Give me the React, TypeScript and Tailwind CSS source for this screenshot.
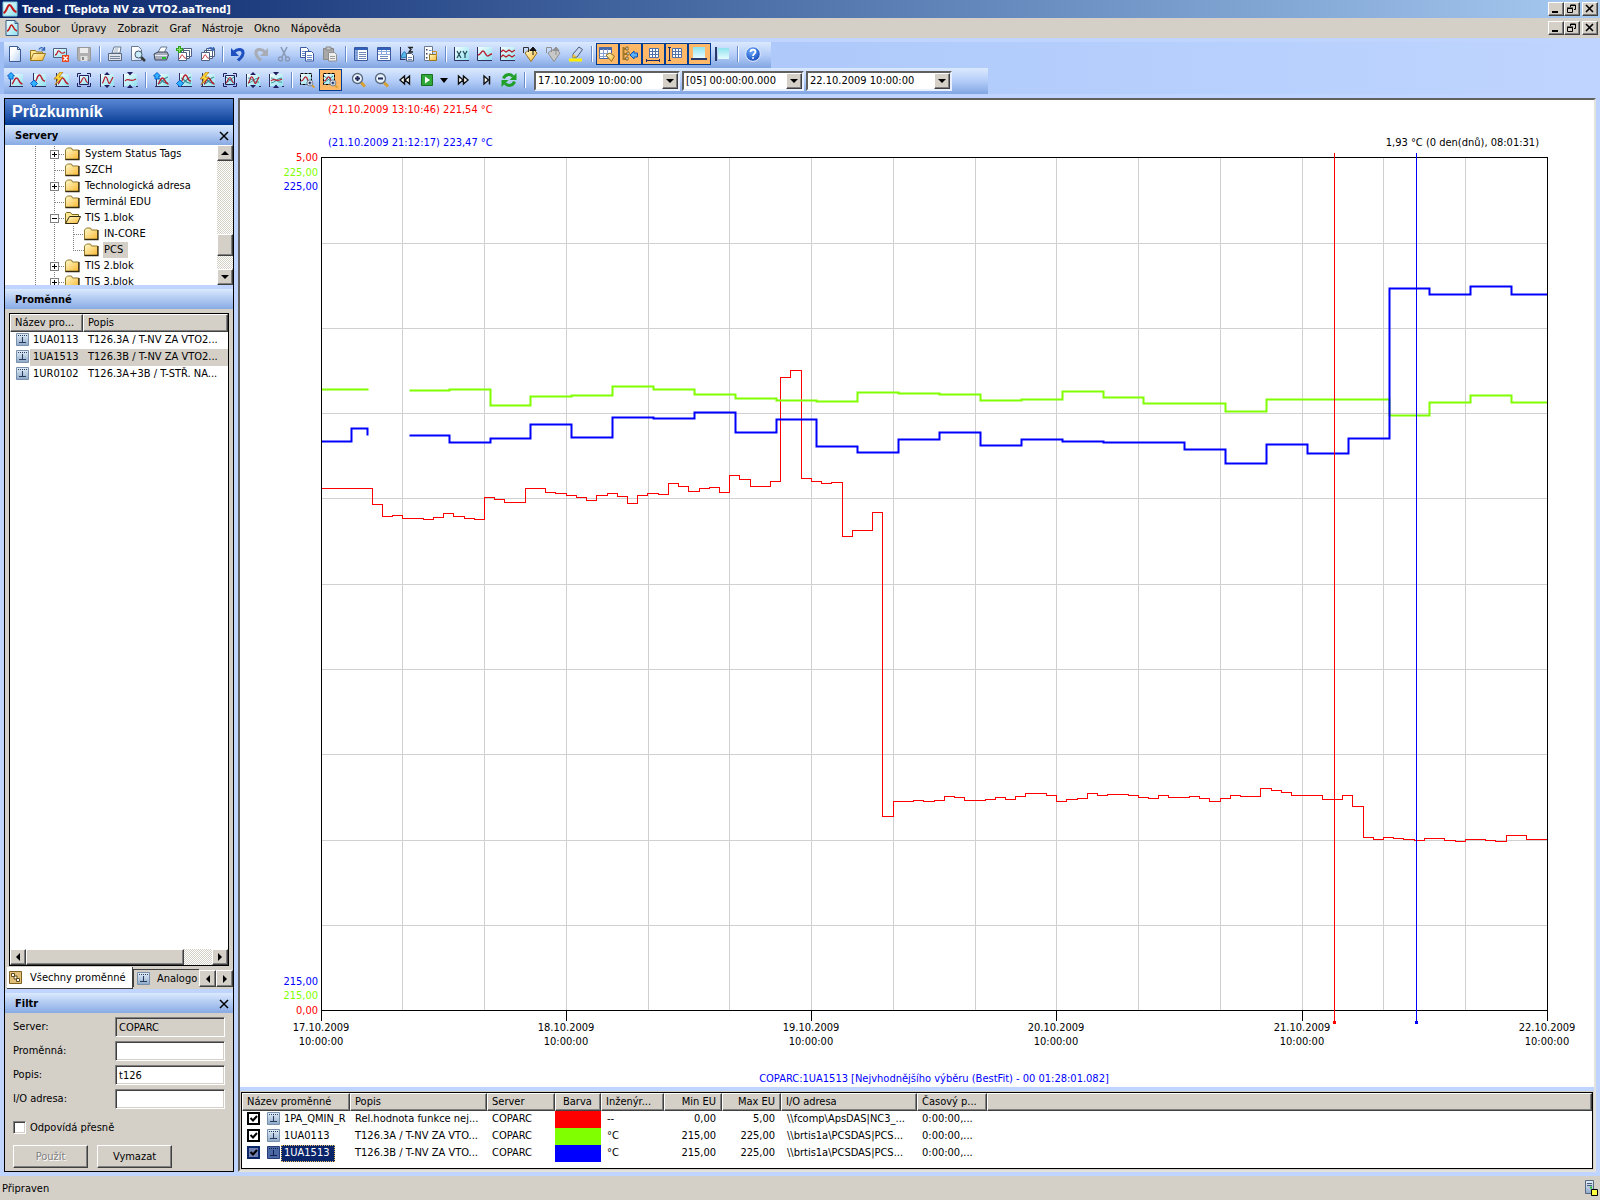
import type { ReactNode } from 'react'
import clsx from 'clsx'

type Point = [x: number, y: number]

const PLOT_W = 1226
const PLOT_H = 853

const GREEN_A: Point[] = [[0, 232], [46, 233]]
const GREEN_B: Point[] = [
  [88, 233], [128, 232], [169, 248], [209, 239], [250, 238], [291, 229], [332, 232], [373, 237],
  [414, 241], [455, 243], [495, 244], [536, 235], [577, 236], [618, 237], [659, 243], [700, 242],
  [741, 234], [782, 240], [822, 246], [904, 254], [945, 242], [1068, 258], [1108, 245], [1149, 238],
  [1190, 245], [PLOT_W, 245],
]

const BLUE_A: Point[] = [[0, 284], [30, 271], [46, 278]]
const BLUE_B: Point[] = [
  [88, 278], [128, 285], [169, 281], [209, 267], [250, 280], [291, 260], [332, 261], [373, 255],
  [414, 275], [455, 262], [495, 289], [536, 295], [577, 282], [618, 275], [659, 288], [700, 282],
  [741, 284], [782, 285], [863, 292], [904, 306], [945, 287], [986, 296], [1027, 281], [1068, 131],
  [1108, 137], [1149, 129], [1190, 137], [PLOT_W, 137],
]

const RED: Point[] = [
  [0, 331], [51, 347], [61, 359], [71, 358], [81, 361], [102, 362], [112, 360], [122, 356],
  [132, 359], [143, 361], [153, 362], [163, 340], [173, 342], [183, 345], [204, 331], [224, 335],
  [234, 336], [245, 338], [255, 340], [265, 343], [275, 338], [286, 336], [296, 339], [306, 346],
  [316, 338], [326, 336], [337, 337], [347, 326], [357, 329], [367, 334], [378, 331], [388, 330],
  [398, 335], [408, 318], [418, 322], [429, 329], [449, 324], [459, 220], [469, 213], [480, 321],
  [490, 324], [500, 326], [510, 325], [521, 379], [531, 373], [551, 355], [561, 659], [572, 644],
  [592, 643], [602, 644], [613, 643], [623, 639], [633, 640], [643, 643], [664, 642], [674, 640],
  [684, 642], [694, 639], [704, 636], [725, 638], [735, 644], [745, 642], [756, 641], [766, 636],
  [776, 638], [786, 637], [807, 638], [817, 640], [827, 641], [837, 638], [847, 640], [868, 639],
  [878, 641], [888, 644], [899, 641], [909, 638], [919, 639], [939, 631], [950, 633], [960, 635],
  [970, 638], [1001, 642], [1021, 638], [1031, 649], [1042, 680], [1052, 682], [1062, 680],
  [1072, 681], [1082, 682], [1093, 683], [1103, 681], [1123, 683], [1134, 684], [1144, 682],
  [1164, 683], [1174, 684], [1185, 678], [1205, 682], [PLOT_W, 682],
]

const DAYS = ['17.10.2009', '18.10.2009', '19.10.2009', '20.10.2009', '21.10.2009', '22.10.2009']

// Each value is held until the next sample
function stepPath(points: Point[]) {
  return points.map(([x, y], i) => (i === 0 ? `M${x} ${y}` : `H${x}V${y}`)).join('')
}

const gridX = (i: number) => Math.floor((i * PLOT_W) / 15 + 0.25)
const gridY = (i: number) => Math.floor((i * PLOT_H) / 10 + 0.7)

const RAISED = 'border border-t-white border-l-white border-r-[#404040] border-b-[#404040] bg-[#d4d0c8] shadow-[inset_-1px_-1px_0_#808080]'
const SUNKEN = 'border border-t-[#808080] border-l-[#808080] border-r-white border-b-white shadow-[inset_1px_1px_0_#404040,inset_-1px_-1px_0_#d4d0c8]'
const DITHER = 'bg-[repeating-conic-gradient(#ffffff_0_25%,#d4d0c8_0_50%)] bg-[length:2px_2px]'

/* ---------- icons ---------- */

function Ico({ children }: { children: ReactNode }) {
  return (
    <svg viewBox="0 0 16 16" className="block h-4 w-4 shrink-0" fill="none" aria-hidden="true">
      {children}
    </svg>
  )
}

function Defs() {
  return (
    <svg className="absolute h-0 w-0" aria-hidden="true">
      <defs>
        <linearGradient id="tile" x1="0" y1="0" x2="1" y2="1">
          <stop offset="0" stopColor="#f4ffff" />
          <stop offset="1" stopColor="#8fe0ee" />
        </linearGradient>
        <linearGradient id="cyan" x1="0" y1="0" x2="0" y2="1">
          <stop offset="0" stopColor="#8fe3ee" />
          <stop offset="1" stopColor="#e6fcff" />
        </linearGradient>
        <linearGradient id="folder" x1="0" y1="0" x2="1" y2="1">
          <stop offset="0" stopColor="#fffbd0" />
          <stop offset="1" stopColor="#f8b830" />
        </linearGradient>
        <linearGradient id="page" x1="0" y1="0" x2="1" y2="1">
          <stop offset="0.3" stopColor="#ffffff" />
          <stop offset="1" stopColor="#b8d0f4" />
        </linearGradient>
        <linearGradient id="steel" x1="0" y1="0" x2="0" y2="1">
          <stop offset="0" stopColor="#e4f0fa" />
          <stop offset="1" stopColor="#8ea8c8" />
        </linearGradient>
        <radialGradient id="help" cx="0.4" cy="0.3" r="0.8">
          <stop offset="0" stopColor="#6fb0ff" />
          <stop offset="1" stopColor="#0a3cb4" />
        </radialGradient>
      </defs>
    </svg>
  )
}

function AppIcon() {
  return (
    <Ico>
      <path d="M1 1h14v14H1z" fill="url(#tile)" stroke="#7cc8dc" />
      <path d="M1.500 12C5 11 5 4 7.500 4S10 10 14.500 11" stroke="#c01818" strokeWidth="2" />
    </Ico>
  )
}

function DocIcon() {
  return (
    <Ico>
      <path d="M2 .5h9l3 3v12H2z" fill="url(#tile)" stroke="#3a5a8a" />
      <path d="M11 .5v3h3" stroke="#3a5a8a" />
      <path d="M3 11C6 11 5.500 5 7.500 5S9 10 13 11" stroke="#c01818" strokeWidth="1.500" />
    </Ico>
  )
}

function Tile({ multi, low, children }: { multi?: boolean; low?: boolean; children?: ReactNode }) {
  return (
    <Ico>
      <path d="M3 2h13v12H3z" fill="url(#tile)" />
      <path d="M3.500 1v14M2 14.500h14" stroke="#303060" />
      {multi && <path d="M5 6C8 6 9 12 15 11M5 12C9 12 10 6 15 5" stroke="#3a9098" strokeWidth="1.200" />}
      <path d={low ? 'M5 10C7 9 7 3 9.500 3S11 9 15 9' : 'M5 12C7 11 7 6 9.500 6S12 12 15.500 12'} stroke="#b81c2c" strokeWidth="1.400" />
      {children}
    </Ico>
  )
}

const Diamond = ({ low }: { low?: boolean }) => (
  <path d={low ? 'M4 8l3.500 3.500L4 15L.5 11.500z' : 'M4 .5L7.500 4H6v3H2V4H.5z'} fill="#30b0ff" stroke="#0860c8" />
)
const Bolt = () => <path d="M7 0L1 7H5L2 13L10 5H6L10 0z" fill="#ffd838" stroke="#a86810" strokeWidth="0.700" />

function Brackets({ multi }: { multi?: boolean }) {
  return (
    <Ico>
      <path d="M3.500 3.500h9v9h-9z" fill="url(#tile)" stroke="#202060" />
      <path d="M1.500 5V1.500H5M11 1.500h3.500V5M14.500 11v3.500H11M5 14.500H1.500V11" stroke="#202060" />
      {multi && <path d="M4 5L12 11M4 11L12 5" stroke="#3a9098" />}
      <path d="M4 11C6 10 6 5.500 8 5.500S9 10 12 11" stroke="#b81c2c" strokeWidth="1.200" />
    </Ico>
  )
}

function Stretch({ multi, shrink }: { multi?: boolean; shrink?: boolean }) {
  return (
    <Ico>
      <path d="M2 2h13v12H2z" fill="url(#tile)" />
      <path d="M1.500 2v13M14 14.500h2" stroke="#303060" />
      {multi && <path d="M3 6C7 6 9 11 14 10M3 11C7 11 9 6 14 6" stroke="#3a9098" />}
      <path d={shrink ? 'M3 9C6 5 8 11 14 7' : 'M3 11C5 11 5 4 7 5S9 13 11 11L14 5'} stroke="#b81c2c" strokeWidth="1.200" />
      <path d={shrink ? 'M5 0h6L8 3.500zM8 12.500l3 3.500H5z' : 'M8 0l3 3H5zM5 13h6l-3 3z'} fill="#202060" />
    </Ico>
  )
}

function Lens({ x = 0, y = 0, small, sign }: { x?: number; y?: number; small?: boolean; sign: '+' | '-' }) {
  return (
    <g transform={`translate(${x} ${y}) scale(${small ? 0.6 : 1})`}>
      <path d="M9.500 10L14 14.500" stroke="#d8a030" strokeWidth="3" />
      <circle cx="6.500" cy="6.500" r="5" fill="#e8f2fc" stroke="#58687c" strokeWidth="1.300" />
      <path d={sign === '+' ? 'M4 6.500h5M6.500 4v5' : 'M4 6.500h5'} stroke="#202858" strokeWidth="2" />
    </g>
  )
}

function ZoomArea({ multi }: { multi?: boolean }) {
  return (
    <Ico>
      <path d="M2 2h10v10H2z" fill="url(#tile)" />
      {multi && <path d="M2 4L11 11M2 11L11 4" stroke="#3a9098" />}
      <path d="M2 9C5 9 5 4 7 5S8 9 10 10" stroke="#b81c2c" strokeWidth="1.200" />
      <path d="M1.500 1.500h11v11h-11z" stroke="#000" strokeDasharray="3 1" />
      <Lens x={7} y={7} small sign="+" />
    </Ico>
  )
}

function Stack({ children }: { children: ReactNode }) {
  return (
    <Ico>
      <path d="M7.500 2.500h8v8h-8zM5.500 4.500h8v8h-8z" stroke="#506080" fill="#fff" />
      <path d="M2.500 6.500h8v8h-8z" fill="#fff" stroke="#506080" />
      <path d="M3 13C5 12 5 8 6.500 9S8 13 10 12" stroke="#c01828" />
      {children}
    </Ico>
  )
}

const BlueArrow = () => <path d="M9 3.500C10 1 12.500 1 14 3M14.500 1v3h-3" stroke="#3868b8" strokeWidth="1.300" />

function Tag({ gray }: { gray?: boolean }) {
  return (
    <Ico>
      <path d="M3 7l4-3h5l3 3-6 8.500z" fill={gray ? '#c8c8c8' : 'url(#folder)'} stroke={gray ? '#909090' : '#987020'} />
      <path d="M1.500 7V1.500h5V6" stroke={gray ? '#909090' : '#303030'} />
      <path d="M11 9V4M8 4.500L11 1l3 3.500z" stroke={gray ? '#909090' : '#101010'} fill={gray ? '#909090' : '#101010'} />
    </Ico>
  )
}

function GridAxis({ side }: { side?: boolean }) {
  return (
    <Ico>
      <path d="M4.500 2.500h9v9h-9zM7.500 2.500v9M10.500 2.500v9M4.500 5.500h9M4.500 8.500h9" fill="#fff" stroke="#5070a8" />
      <path d={side ? 'M1.500 1v14M0 1.500h3M0 14.500h3' : 'M1 14.500h14M1.500 13v3M14.500 13v3'} stroke="#182868" />
    </Ico>
  )
}

const row1: (ReactNode | '|')[] = [
  <Ico><path d="M2.500 .5h8l3 3v12h-11z" fill="url(#page)" stroke="#3c5a94" /><path d="M10.500 .5v3h3" stroke="#3c5a94" /></Ico>,
  <Ico><path d="M.5 14.500v-10h5l1 1.500h6v2" fill="#ffe890" stroke="#9a7820" /><path d="M.5 14.500l3-7h12l-3 7z" fill="url(#folder)" stroke="#9a7820" /><BlueArrow /></Ico>,
  <Ico><path d="M.5 2.500h13v9H.5z" fill="url(#tile)" stroke="#506080" /><path d="M2 9C5 9 4 4 6 5S8 9 12 6" stroke="#c01828" strokeWidth="1.300" /><path d="M9 9h7v7H9z" fill="#e84820" /><path d="M10.500 10.500l4 4M14.500 10.500l-4 4" stroke="#fff" strokeWidth="1.300" /></Ico>,
  <Ico><path d="M1.500 1.500h13v13h-12l-1-1z" fill="#b0b0b0" stroke="#989898" /><path d="M4 2h8v5H4z" fill="#ececec" /><path d="M4.500 10h7v5h-7z" fill="#e0e0e0" /><path d="M6 11h2v3H6z" fill="#888" /></Ico>,
  '|',
  <Ico><path d="M5 7l2-6h7l-1 6z" fill="#fff" stroke="#687890" /><path d="M7.500 3h4M7 5h4" stroke="#98a8c0" /><path d="M1.500 7.500h13v7h-13z" fill="#e0e4ea" stroke="#586880" /><path d="M3 10.500h10M3 12.500h10" stroke="#78889c" /></Ico>,
  <Ico><path d="M1.500 .5h7l3 3v11h-10z" fill="url(#page)" stroke="#687890" /><path d="M11 11l4 4" stroke="#383838" strokeWidth="2.500" /><circle cx="8.500" cy="8.500" r="3.500" fill="#c8ecfa" stroke="#485868" /></Ico>,
  <Ico><path d="M5 6l3-5h6l-3 6z" fill="#fff" stroke="#687890" /><path d="M1 8l4-2h9l1.500 3-2 5H2z" fill="#a8acbc" stroke="#404858" /><path d="M2 9.500h12" stroke="#e8ecf4" /><path d="M9 11h4v2H9z" fill="#20c030" /></Ico>,
  <Stack><path d="M3.500 0v7M0 3.500h7" stroke="#30a020" strokeWidth="3" /><path d="M3.500 1v5M1 3.500h5" stroke="#90e070" /></Stack>,
  <Stack><BlueArrow /></Stack>,
  '|',
  <Ico><path d="M4 6C8 2 13.500 3 13 7.500S10 12 8 14.500" stroke="#2050c0" strokeWidth="3" /><path d="M1 2v8h8z" fill="#2050c0" /></Ico>,
  <Ico><path d="M12 6C8 2 2.500 3 3 7.500S6 12 8 14.500" stroke="#a8acb4" strokeWidth="3" /><path d="M15 2v8H7z" fill="#a8acb4" /></Ico>,
  <Ico><path d="M5 1l5 10M11 1L6 11" stroke="#8898b4" strokeWidth="1.500" /><circle cx="4.500" cy="13" r="2" stroke="#8898b4" strokeWidth="1.300" /><circle cx="11.500" cy="13" r="2" stroke="#8898b4" strokeWidth="1.300" /></Ico>,
  <Ico><path d="M1.500 1.500h6l2 2v8h-8z" fill="#fff" stroke="#3858a0" /><path d="M3 5.500h4M3 7.500h4M3 9.500h3" stroke="#6888c8" /><path d="M6.500 5.500h6l2 2v7.500h-8z" fill="#fff" stroke="#3858a0" /><path d="M8 9.500h5M8 11.500h5M8 13.500h5" stroke="#6888c8" /></Ico>,
  <Ico><path d="M1.500 2.500h10v11h-10z" fill="#a8a8a8" stroke="#888" /><path d="M4 1h5v3H4z" fill="#c8c8c8" stroke="#888" /><path d="M6.500 6.500h6l2 2v6.500h-8z" fill="#eee" stroke="#909090" /><path d="M8 10.500h5M8 12.500h5" stroke="#a0a0a0" /></Ico>,
  '|',
  <Ico><path d="M1.500 1.500h13v13h-13z" fill="#fff" stroke="#3858a0" /><path d="M2 2h3v12H2z" fill="#88a8e0" /><path d="M2 3h12" stroke="#3060b8" strokeWidth="2" /><path d="M6 6.500h7M6 8.500h7M6 10.500h7M6 12.500h7M3 6.500h1M3 9.500h1M3 12.500h1" stroke="#7088b8" /></Ico>,
  <Ico><path d="M1.500 1.500h13v13h-13z" fill="#fff" stroke="#3858a0" /><path d="M2 3h12" stroke="#3060b8" strokeWidth="2" /><path d="M2 5.500h12M5.500 4v4M10.500 4v4M2 8.500h12" stroke="#88a8e0" /><path d="M4 10.500h8M4 12.500h8" stroke="#7088b8" /></Ico>,
  <Ico><path d="M1.500 1v13M1.500 13.500h5" stroke="#303060" /><path d="M2 12c2-8 5-8 6-1z" fill="#58b8e8" stroke="#2878b8" /><path d="M14 1.500h-4l2 2-2 2.500h4" stroke="#202020" strokeWidth="1.300" /><path d="M7.500 7.500h5l2 2v5.500h-7z" fill="#fff" stroke="#485878" /><path d="M9 11.500h4M9 13.500h4" stroke="#7088b8" /></Ico>,
  <Ico><path d="M2.500 .5h8v14h-8z" fill="#fff" stroke="#687890" /><path d="M4 3h1.500v1.500H4zM4 7h1.500v1.500H4zM4 11h1.500v1.500H4z" fill="#404858" /><path d="M7 4.500h2.500M7 8h2" stroke="#7088b8" /><path d="M7.500 8.500h7v6h-7z" fill="url(#folder)" stroke="#9a7820" /><path d="M10 5.500h4.500v5" stroke="#c89020" /></Ico>,
  '|',
  <Ico><path d="M2 1h14v13H2z" fill="url(#tile)" /><path d="M1.500 1v13.500H16M1 4h1M1 8h1" stroke="#303060" /><path d="M4 5l4 7M8 5l-4 7M10 5l2 3.500V12M14 5l-2 3.500" stroke="#204858" strokeWidth="1.200" /></Ico>,
  <Ico><path d="M2 1h14v13H2z" fill="url(#tile)" /><path d="M1.500 1v13.500H16" stroke="#303060" /><path d="M2 9C5 9 5 5 7 5S10 11 12 10 14 8 16 8" stroke="#b81c2c" strokeWidth="1.300" /></Ico>,
  <Ico><path d="M2 1h14v13H2z" fill="url(#tile)" /><path d="M1.500 1v13.500H16" stroke="#303060" /><path d="M2 6l2-2 3 2 3-2 3 2 3-2M2 11l2-2 3 2 3-2 3 2 3-2" stroke="#b81c2c" strokeWidth="1.300" /></Ico>,
  <Tag />,
  <Tag gray />,
  <Ico><path d="M5 8l6-7 3.500 2.500L9 11l-4 1z" fill="#c8d8f0" stroke="#485878" /><path d="M5 8l4 3-4.500 1z" fill="#e8c030" /><path d="M1 14h13" stroke="#fff000" strokeWidth="3" /></Ico>,
  '|',
]

const viewToggles = [
  { label: 'Tabulka značek', icon: <Ico><path d="M.5 1.500h12v11H.5z" fill="#fff" stroke="#4868a8" /><path d="M.5 2.500h12" stroke="#4868a8" strokeWidth="3" /><path d="M.5 7.500h12M.5 10.500h12M4.500 3v9M8.500 3v9" stroke="#88a0d0" /><path d="M7 9l4-2 4.500 3-3 5.500z" fill="url(#folder)" stroke="#987020" /></Ico> },
  { label: 'Seznam', icon: <Ico><path d="M1.500 1v13M1 3h4M1 8h4M1 13h4" stroke="#a07828" strokeWidth="2" /><path d="M4 1h2v3H4zM5 6h2v3H5zM4 11h2v3H4z" fill="#fff" stroke="#806020" /><path d="M8 9l4-4v2h3.500v4H12v2z" fill="#58b0f8" stroke="#1050b0" /></Ico> },
  { label: 'Osa X', icon: <GridAxis /> },
  { label: 'Osa Y', icon: <GridAxis side /> },
  { label: 'Spodní panel', icon: <Ico><path d="M2 1h12v11H2z" fill="url(#cyan)" /><path d="M0 13h16" stroke="#283868" strokeWidth="2" /></Ico> },
]

const row2: (ReactNode | '|')[] = [
  <Tile><Diamond /></Tile>,
  <Tile low><Diamond low /></Tile>,
  <Tile><Bolt /></Tile>,
  <Brackets />,
  <Stretch />,
  <Stretch shrink />,
  '|',
  <Tile multi><Diamond /></Tile>,
  <Tile multi low><Diamond low /></Tile>,
  <Tile multi><Bolt /></Tile>,
  <Brackets multi />,
  <Stretch multi />,
  <Stretch multi shrink />,
  '|',
  <ZoomArea />,
]

const navIcons: ReactNode[] = [
  <Ico><Lens sign="+" /></Ico>,
  <Ico><Lens sign="-" /></Ico>,
  <Ico><path d="M7.500 4v8L3 8zM12.500 4v8L8 8z" fill="#fff" stroke="#101010" strokeWidth="1.400" /></Ico>,
]

function Separator() {
  return (
    <span className="flex h-[22px] w-2 shrink-0 items-center justify-center">
      <span className="h-4 w-[2px] border-r border-white bg-[#6a8ccb]" />
    </span>
  )
}

function ToolButton({ label, pressed, children }: { label: string; pressed?: boolean; children: ReactNode }) {
  return (
    <button
      type="button"
      aria-label={label}
      aria-pressed={pressed}
      className={clsx('flex h-[22px] w-[23px] shrink-0 items-center', pressed ? 'border border-[#003c94] bg-[#ffb868] pl-[2px]' : 'pl-[3px]')}
    >
      {children}
    </button>
  )
}

function ToolItems({ items, name }: { items: (ReactNode | '|')[]; name: string }) {
  return (
    <>
      {items.map((item, i) =>
        item === '|' ? <Separator key={i} /> : <ToolButton key={i} label={`${name} ${i + 1}`}>{item}</ToolButton>
      )}
    </>
  )
}

function Combo({ label, value, className }: { label: string; value: string; className: string }) {
  return (
    <div className={clsx('flex h-5 shrink-0 items-stretch border-2 border-t-[#606060] border-l-[#606060] border-r-[#e8f0ff] border-b-[#e8f0ff] bg-white', className)}>
      <select aria-label={label} className="h-4 min-w-0 flex-1 appearance-none bg-white pl-[2px] leading-4 outline-none">
        <option>{value}</option>
      </select>
      <span className={clsx('flex w-4 shrink-0 items-center justify-center', RAISED)}>
        <Triangle dir="down" />
      </span>
    </div>
  )
}

function Triangle({ dir }: { dir: 'up' | 'down' | 'left' | 'right' }) {
  const d = { up: 'M0 6h8L4 2z', down: 'M0 2h8L4 6z', left: 'M6 0v8L2 4z', right: 'M2 0v8l4-4z' }[dir]
  return (
    <svg viewBox="0 0 8 8" className="h-2 w-2" aria-hidden="true">
      <path d={d} fill="#000" />
    </svg>
  )
}

function ScrollButton({ dir, label, className }: { dir: 'up' | 'down' | 'left' | 'right'; label: string; className: string }) {
  return (
    <button type="button" aria-label={label} className={clsx('flex shrink-0 items-center justify-center', RAISED, className)}>
      <Triangle dir={dir} />
    </button>
  )
}

/* ---------- title and menu ---------- */

function WindowButtons() {
  const btn = clsx('flex h-[14px] w-4 items-center justify-center', RAISED)
  return (
    <div className="ml-auto flex pr-[2px]">
      <button type="button" aria-label="Minimalizovat" className={btn}>
        <svg viewBox="0 0 12 10" className="h-[10px] w-3"><path d="M2 8h6" stroke="#000" strokeWidth="2" /></svg>
      </button>
      <button type="button" aria-label="Obnovit" className={btn}>
        <svg viewBox="0 0 12 10" className="h-[10px] w-3" fill="none"><path d="M4.500 3V1h5v4.500H8M4 1.500h6M1.500 4.500h5v4h-5zM1 4h6" stroke="#000" /></svg>
      </button>
      <button type="button" aria-label="Zavřít" className={clsx(btn, 'ml-[2px]')}>
        <svg viewBox="0 0 12 10" className="h-[10px] w-3"><path d="M2 1l7 7M9 1L2 8" stroke="#000" strokeWidth="1.600" /></svg>
      </button>
    </div>
  )
}

function Toolbars() {
  const bar = 'flex h-[26px] items-start pt-px bg-linear-to-b from-[#dbe9fd] via-[#b4cdf8] to-[#82a6e2]'
  return (
    <div className="my-1 bg-linear-to-r from-[#9ebef5] to-[#bfd5ff] pl-1">
      <div className={clsx(bar, 'w-fit pr-[6px]')}>
        <ToolItems items={row1} name="Nástroj" />
        {viewToggles.map((t) => (
          <ToolButton key={t.label} label={t.label} pressed>{t.icon}</ToolButton>
        ))}
        <ToolButton label="Boční panel">
          <Ico><path d="M4 2h11v11H4z" fill="url(#cyan)" /><path d="M2 1v14" stroke="#283868" strokeWidth="2" /></Ico>
        </ToolButton>
        <Separator />
        <ToolButton label="Nápověda">
          <Ico>
            <circle cx="8" cy="8" r="7.300" fill="url(#help)" stroke="#e8f0ff" />
            <path d="M5.500 6C5.500 3 10.500 3 10.500 6C10.500 7.500 8 7.800 8 10M8 11.200v1.600" stroke="#fff" strokeWidth="1.800" />
          </Ico>
        </ToolButton>
      </div>
      <div className={clsx(bar, 'w-fit pr-9')}>
        <ToolItems items={row2} name="Měřítko" />
        <ToolButton label="Přiblížit všechny" pressed><ZoomArea multi /></ToolButton>
        <div className="flex pl-[6px]">
          <ToolItems items={navIcons} name="Posun" />
        </div>
        <button type="button" aria-label="Přehrát" className="flex h-[22px] w-[19px] items-center justify-center">
          <Ico><path d="M2.500 2.500h11v11h-11z" fill="#30a838" stroke="#187020" /><path d="M6 4.500l5 3.500-5 3.500z" fill="#fff" /></Ico>
        </button>
        <button type="button" aria-label="Rychlost" className="flex h-[22px] w-4 items-center justify-center">
          <svg viewBox="0 0 8 5" className="h-[5px] w-2"><path d="M0 0h8L4 5z" fill="#000" /></svg>
        </button>
        <ToolButton label="Vpřed"><Ico><path d="M3.500 4v8L8 8zM8.500 4v8L13 8z" fill="#fff" stroke="#101010" strokeWidth="1.400" /></Ico></ToolButton>
        <ToolButton label="Na konec"><Ico><path d="M6 4v8l4.500-4z" fill="#fff" stroke="#101010" strokeWidth="1.400" /><path d="M11.500 4v8.500" stroke="#101010" strokeWidth="1.500" /></Ico></ToolButton>
        <ToolButton label="Obnovit data">
          <Ico>
            <path d="M2.500 6.500C4 2 9 1.500 12 4.500M13.500 9.500C12 14 7 14.500 4 11.500" stroke="#20a028" strokeWidth="3" />
            <path d="M15.500 1v7H8.500zM.5 15V8h7z" fill="#20a028" />
          </Ico>
        </ToolButton>
        <Separator />
        <div className="flex gap-[2px] pt-[2px] pl-[5px]">
          <Combo label="Začátek" value="17.10.2009 10:00:00" className="w-[146px]" />
          <Combo label="Délka" value="[05] 00:00:00.000" className="w-[122px]" />
          <Combo label="Konec" value="22.10.2009 10:00:00" className="w-[146px]" />
        </div>
      </div>
    </div>
  )
}

/* ---------- sidebar ---------- */

function PaneTitle({ children, closable }: { children: ReactNode; closable?: boolean }) {
  return (
    <div className="flex h-5 shrink-0 items-center justify-between bg-linear-to-b from-[#dbe9fd] to-[#88aae4] pt-[2px] pr-1 pl-[10px]">
      <h2 className="font-bold">{children}</h2>
      {closable && (
        <button type="button" aria-label="Zavřít panel">
          <svg viewBox="0 0 10 10" className="h-[10px] w-[10px]"><path d="M1 1l8 8M9 1L1 9" stroke="#000" strokeWidth="1.500" /></svg>
        </button>
      )}
    </div>
  )
}

interface TreeNode {
  label: string
  sign?: '+' | '-'
  child?: 'mid' | 'last'
  selected?: boolean
}

const tree: TreeNode[] = [
  { label: 'System Status Tags', sign: '+' },
  { label: 'SZCH' },
  { label: 'Technologická adresa', sign: '+' },
  { label: 'Terminál EDU' },
  { label: 'TIS 1.blok', sign: '-' },
  { label: 'IN-CORE', child: 'mid' },
  { label: 'PCS', child: 'last', selected: true },
  { label: 'TIS 2.blok', sign: '+' },
  { label: 'TIS 3.blok', sign: '+' },
]

function TreeRow({ node }: { node: TreeNode }) {
  const w = node.child ? 79 : 60
  return (
    <li className="flex h-4 items-center">
      <svg width={w} height="16" className="shrink-0" fill="none" shapeRendering="crispEdges" aria-hidden="true">
        <path d="M30.500 0v16M49.500 0v16" stroke="#808080" strokeDasharray="1 1" />
        {node.child ? (
          <path d={node.child === 'last' ? 'M68.500 0v8.500h11' : 'M68.500 0v16M69 8.500h10'} stroke="#808080" strokeDasharray="1 1" />
        ) : (
          <path d="M50 8.500h10" stroke="#808080" strokeDasharray="1 1" />
        )}
        {node.sign && (
          <>
            <path d="M45.500 4.500h8v8h-8z" fill="#fff" stroke="#808080" />
            <path d={node.sign === '+' ? 'M47 8.500h5M49.500 6v5' : 'M47 8.500h5'} stroke="#000" />
          </>
        )}
      </svg>
      <Ico>
        {node.sign === '-' ? (
          <>
            <path d="M.5 13.500V3.500l1-1h4l1.500 2h6.500v2" fill="#ffe890" stroke="#806820" />
            <path d="M.5 13.500l4-7h11l-3 7z" fill="url(#folder)" stroke="#302810" />
          </>
        ) : (
          <>
            <path d="M.5 13.500V4l2-2h4l1 2h6v9.500z" fill="url(#folder)" stroke="#907828" />
            <path d="M.5 13.500h13.500V4" stroke="#302810" strokeWidth="1.300" />
          </>
        )}
      </Ico>
      <span className={clsx('ml-[3px] h-4 px-[1px] leading-4 whitespace-nowrap', node.selected && 'bg-[#d4d0c8] pr-[5px]')}>{node.label}</span>
    </li>
  )
}

function VarIcon({ dark }: { dark?: boolean }) {
  return (
    <svg viewBox="0 0 13 13" className="h-[13px] w-[13px] shrink-0" fill="none" aria-hidden="true">
      <path d="M.5 .5h12v12H.5z" fill={dark ? '#4c68a4' : 'url(#steel)'} stroke={dark ? '#283c78' : '#7890ac'} />
      <path d="M2 2.500h1M4 2.500h1M6 2.500h1M8 2.500h1M10 2.500h1M6.500 4v6M3 9.500h7" stroke={dark ? '#102050' : '#283c60'} />
    </svg>
  )
}

const variables = [
  { name: '1UA0113', desc: 'T126.3A / T-NV ZA VTO2...' },
  { name: '1UA1513', desc: 'T126.3B / T-NV ZA VTO2...', selected: true },
  { name: '1UR0102', desc: 'T126.3A+3B / T-STŘ. NA...' },
]

const TH = 'h-[17px] border border-t-white border-l-white border-r-[#404040] border-b-[#404040] bg-[#d4d0c8] pl-1 text-left font-normal whitespace-nowrap overflow-hidden shadow-[inset_-1px_-1px_0_#808080]'

function FilterField({ id, label, value, readOnly }: { id: string; label: string; value?: string; readOnly?: boolean }) {
  return (
    <div className="flex h-5 items-center">
      <label htmlFor={id} className="w-[102px] pb-px">{label}</label>
      <input id={id} defaultValue={value} readOnly={readOnly} className={clsx('h-5 min-w-0 flex-1 px-[3px] outline-none', SUNKEN, readOnly ? 'bg-[#d4d0c8]' : 'bg-white')} />
    </div>
  )
}

function Sidebar() {
  return (
    <aside className="flex w-[230px] shrink-0 flex-col border border-black bg-[#d4d0c8]">
      <h1 className="flex h-[26px] shrink-0 items-center bg-linear-to-b from-[#5a88d4] to-[#003a94] pl-[7px] font-['Liberation_Sans',sans-serif] text-base font-bold text-white">
        Průzkumník
      </h1>
      <PaneTitle closable>Servery</PaneTitle>
      <div className="flex h-[140px] shrink-0 overflow-hidden bg-white">
        <ul className="min-w-0 flex-1 pt-px">
          {tree.map((n) => <TreeRow key={n.label} node={n} />)}
        </ul>
        <div className={clsx('flex w-4 flex-col', DITHER)}>
          <ScrollButton dir="up" label="Nahoru" className="h-4 w-4" />
          <div className="flex-1" />
          <div className={clsx('h-[22px]', RAISED)} />
          <div className="h-[13px]" />
          <ScrollButton dir="down" label="Dolů" className="h-4 w-4" />
        </div>
      </div>
      <div className="h-1 shrink-0 bg-[#bfd5ff]" />
      <PaneTitle>Proměnné</PaneTitle>
      <div className="mx-1 mt-1 mb-[1px] flex flex-1 flex-col border border-black bg-white">
        <table className="w-full table-fixed border-separate border-spacing-0">
          <thead>
            <tr>
              <th className={clsx(TH, 'w-[73px]')}>Název pro...</th>
              <th className={TH}>Popis</th>
            </tr>
          </thead>
          <tbody>
            {variables.map((v) => (
              <tr key={v.name} className="h-[17px]">
                <td className="p-0">
                  <div className="flex h-[17px] items-start">
                    <span className="flex w-5 justify-center pt-px pl-[5px]"><VarIcon /></span>
                    <span className={clsx('h-full flex-1 pl-[3px]', v.selected && 'bg-[#d4d0c8]')}>{v.name}</span>
                  </div>
                </td>
                <td className={clsx('overflow-hidden p-0 pl-[5px] align-top whitespace-nowrap', v.selected && 'bg-[#d4d0c8]')}>{v.desc}</td>
              </tr>
            ))}
          </tbody>
        </table>
        <div className={clsx('mt-auto flex h-4', DITHER)}>
          <ScrollButton dir="left" label="Vlevo" className="h-4 w-4" />
          <div className={clsx('w-[158px]', RAISED)} />
          <ScrollButton dir="right" label="Vpravo" className="ml-auto h-4 w-4" />
        </div>
      </div>
      <div className="flex h-[22px] shrink-0 items-stretch pl-[2px]" role="tablist">
        <button type="button" role="tab" aria-selected="true" className="flex w-[126px] shrink-0 items-center gap-2 border-r border-b border-[#404040] bg-white pl-[2px] whitespace-nowrap">
          <svg viewBox="0 0 13 13" className="h-[13px] w-[13px] shrink-0" fill="none">
            <path d="M.5 .5h12v12H.5z" fill="#e0c078" stroke="#806020" />
            <path d="M2.500 2.500h3v3h-3zM5 5h3v3H5zM7.500 7.500h3v3h-3z" fill="#fff" stroke="#604818" />
          </svg>
          Všechny proměnné
        </button>
        <button type="button" role="tab" aria-selected="false" className="my-[2px] flex min-w-0 flex-1 items-center gap-[7px] border-t border-l border-[#404040] pl-[3px]">
          <VarIcon />
          Analogo
        </button>
        <ScrollButton dir="left" label="Předchozí karta" className="mt-[3px] h-[17px] w-[17px]" />
        <ScrollButton dir="right" label="Další karta" className="mt-[3px] h-[17px] w-[17px]" />
      </div>
      <div className="h-1 shrink-0 bg-[#bfd5ff]" />
      <PaneTitle closable>Filtr</PaneTitle>
      <form className="flex h-[158px] shrink-0 flex-col gap-1 px-2 pt-1">
        <FilterField id="server" label="Server:" value="COPARC" readOnly />
        <FilterField id="tag" label="Proměnná:" />
        <FilterField id="desc" label="Popis:" value="t126" />
        <FilterField id="io" label="I/O adresa:" />
        <label className="mt-2 flex h-[13px] items-center gap-1">
          <input type="checkbox" className={clsx('h-[13px] w-[13px] appearance-none bg-white', SUNKEN)} />
          Odpovídá přesně
        </label>
        <div className="mt-[7px] flex gap-[9px]">
          <button type="button" disabled className={clsx('h-[23px] w-[75px] text-[#808080] [text-shadow:1px_1px_0_#fff]', RAISED)}>Použít</button>
          <button type="button" className={clsx('h-[23px] w-[75px]', RAISED)}>Vymazat</button>
        </div>
      </form>
    </aside>
  )
}

/* ---------- chart ---------- */

function Chart() {
  return (
    <svg viewBox="-81 -57 1354 987" className="block h-auto w-full bg-white text-[11px]" fill="none" role="img" aria-label="Trend">
      <g transform="translate(0.5 0.5)">
        <g stroke="#d0d0d0" shapeRendering="crispEdges">
          {Array.from({ length: 14 }, (_, i) => (
            <path key={i} d={`M${gridX(i + 1)} 0V${PLOT_H}`} />
          ))}
          {Array.from({ length: 9 }, (_, i) => (
            <path key={i} d={`M0 ${gridY(i + 1)}H${PLOT_W}`} />
          ))}
        </g>
        <path d={stepPath(RED)} stroke="#f00" shapeRendering="crispEdges" />
        <path d={stepPath(GREEN_A) + stepPath(GREEN_B)} stroke="#80ff00" strokeWidth="2" />
        <path d={stepPath(BLUE_A) + stepPath(BLUE_B)} stroke="#00f" strokeWidth="2" />
        <g shapeRendering="crispEdges">
          <path d={`M0 0H${PLOT_W}V${PLOT_H}H0z`} stroke="#000" />
          {DAYS.map((d, i) => (
            <path key={d} d={`M${gridX(i * 3)} ${PLOT_H}v10`} stroke="#000" />
          ))}
          <path d="M1013-5V866" stroke="#f00" />
          <path d="M1011.500 865h3" stroke="#f00" strokeWidth="3" />
          <path d="M1095-5V866" stroke="#00f" />
          <path d="M1093.500 865h3" stroke="#00f" strokeWidth="3" />
        </g>
      </g>
      <g fill="#000" textAnchor="middle">
        {DAYS.map((d, i) => (
          <text key={d} x={gridX(i * 3)} y="874">
            {d}
            <tspan x={gridX(i * 3)} y="888">10:00:00</tspan>
          </text>
        ))}
      </g>
      <g textAnchor="end">
        <text x="-3" y="4" fill="#f00">5,00</text>
        <text x="-3" y="19" fill="#80ff00">225,00</text>
        <text x="-3" y="33" fill="#00f">225,00</text>
        <text x="-3" y="828" fill="#00f">215,00</text>
        <text x="-3" y="842" fill="#80ff00">215,00</text>
        <text x="-3" y="857" fill="#f00">0,00</text>
        <text x="1218" y="-11" fill="#000">1,93 °C (0 den(dnů), 08:01:31)</text>
      </g>
      <text x="7" y="-44" fill="#f00">(21.10.2009 13:10:46) 221,54 °C</text>
      <text x="7" y="-11" fill="#00f">(21.10.2009 21:12:17) 223,47 °C</text>
      <text x="613" y="925" fill="#00f" textAnchor="middle">COPARC:1UA1513 [Nejvhodnějšího výběru (BestFit) - 00 01:28:01.082]</text>
    </svg>
  )
}

/* ---------- tag table ---------- */

const tags = [
  { name: '1PA_QMIN_R', desc: 'Rel.hodnota funkce nej...', color: 'bg-[#ff0000]', unit: '--', min: '0,00', max: '5,00', io: '\\\\fcomp\\ApsDAS|NC3_...' },
  { name: '1UA0113', desc: 'T126.3A / T-NV ZA VTO...', color: 'bg-[#80ff00]', unit: '°C', min: '215,00', max: '225,00', io: '\\\\brtis1a\\PCSDAS|PCS...' },
  { name: '1UA1513', desc: 'T126.3B / T-NV ZA VTO...', color: 'bg-[#0000ff]', unit: '°C', min: '215,00', max: '225,00', io: '\\\\brtis1a\\PCSDAS|PCS...', selected: true },
]

function TagTable() {
  const cell = 'overflow-hidden p-0 pl-[5px] align-top whitespace-nowrap'
  return (
    <div className="bg-[#d4d0c8] p-px">
      <div className="h-[77px] border border-black bg-white">
        <table className="w-full table-fixed border-separate border-spacing-0">
          <thead>
            <tr>
              <th className={clsx(TH, 'w-[108px]')}>Název proměnné</th>
              <th className={clsx(TH, 'w-[137px]')}>Popis</th>
              <th className={clsx(TH, 'w-[68px]')}>Server</th>
              <th className={clsx(TH, 'w-[46px] pl-[7px]')}>Barva</th>
              <th className={clsx(TH, 'w-[63px]')}>Inženýr...</th>
              <th className={clsx(TH, 'w-[58px] pr-[5px] text-right')}>Min EU</th>
              <th className={clsx(TH, 'w-[59px] pr-[5px] text-right')}>Max EU</th>
              <th className={clsx(TH, 'w-[136px]')}>I/O adresa</th>
              <th className={clsx(TH, 'w-[70px]')}>Časový p...</th>
              <th className={TH} aria-label="Další" />
            </tr>
          </thead>
          <tbody>
            {tags.map((t) => (
              <tr key={t.name} className="h-[17px]">
                <td className="overflow-hidden p-0 whitespace-nowrap">
                  <div className="flex h-[17px] items-start pl-[5px]">
                    <span className="relative mt-px flex h-[13px] w-[13px] shrink-0">
                      <input
                        type="checkbox"
                        defaultChecked
                        aria-label={t.name}
                        className={clsx('peer h-[13px] w-[13px] appearance-none border-2', t.selected ? 'border-[#0a246a] bg-[#7080b0]' : 'border-black bg-white')}
                      />
                      <svg viewBox="0 0 13 13" className="pointer-events-none absolute inset-0 hidden peer-checked:block" fill="none">
                        <path d="M3.500 6l2.500 2.500L10 4" stroke="#000" strokeWidth="2" />
                      </svg>
                    </span>
                    <span className="mt-px ml-[7px]"><VarIcon dark={t.selected} /></span>
                    <span className={clsx('ml-[1px] h-[17px] px-[3px]', t.selected && 'bg-[#0a246a] pr-[5px] text-white outline-1 -outline-offset-1 outline-dotted outline-[#e0c060]')}>{t.name}</span>
                  </div>
                </td>
                <td className={cell}>{t.desc}</td>
                <td className={cell}>COPARC</td>
                <td className={clsx('p-0', t.color)} />
                <td className={clsx(cell, 'pl-[6px]')}>{t.unit}</td>
                <td className={clsx(cell, 'pr-[6px] text-right')}>{t.min}</td>
                <td className={clsx(cell, 'pr-[6px] text-right')}>{t.max}</td>
                <td className={clsx(cell, 'pl-[6px]')}>{t.io}</td>
                <td className={cell}>0:00:00,...</td>
                <td />
              </tr>
            ))}
          </tbody>
        </table>
      </div>
    </div>
  )
}

export default function App() {
  return (
    <div className="flex min-h-screen flex-col bg-[#bfd5ff] font-['DejaVu_Sans_Condensed','Noto_Sans',sans-serif] text-[11px] leading-4 text-black">
      <Defs />
      <header>
        <div className="flex h-[18px] items-center gap-1 bg-linear-to-r from-[#0a246a] to-[#a6caf0] pl-[2px] font-bold text-white">
          <AppIcon />
          <span className="pt-px">Trend - [Teplota NV za VTO2.aaTrend]</span>
          <WindowButtons />
        </div>
        <nav className="flex h-5 items-center bg-[#d4d0c8] pl-1">
          <DocIcon />
          {['Soubor', 'Úpravy', 'Zobrazit', 'Graf', 'Nástroje', 'Okno', 'Nápověda'].map((m) => (
            <button key={m} type="button" className="pt-px pr-[6px] pl-[5px]">{m}</button>
          ))}
          <WindowButtons />
        </nav>
      </header>
      <Toolbars />
      <div className="flex flex-1 gap-1 px-1 pb-1">
        <Sidebar />
        <main className="flex min-w-0 flex-1 flex-col border-2 border-t-[#606060] border-r-[#e4e2de] border-b-[#e4e2de] border-l-[#606060] bg-[#bfd5ff]">
          <Chart />
          <div className="mt-auto pt-1">
            <TagTable />
          </div>
        </main>
      </div>
      <footer className="flex h-6 items-center justify-between bg-[#d4d0c8] pr-[2px] pl-[2px]">
        <span className="pt-[2px]">Připraven</span>
        <Ico>
          <path d="M3.500 .5h8v13h-8z" fill="url(#steel)" stroke="#586880" />
          <path d="M5 3.500h5M5 5.500h5" stroke="#485878" />
          <path d="M8 6.500h2v2H8z" fill="#20c030" />
          <path d="M9.500 9.500h6v6h-6z" fill="#ffff40" stroke="#000" />
        </Ico>
      </footer>
    </div>
  )
}
